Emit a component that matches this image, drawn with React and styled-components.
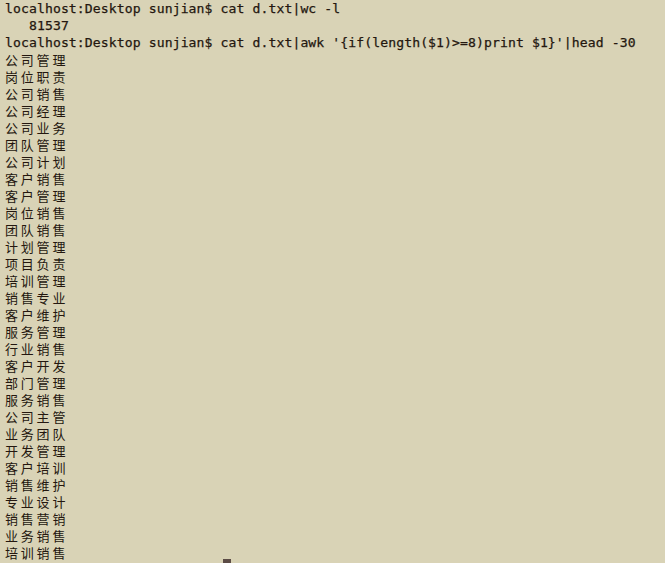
import React from "react";
import styled, { createGlobalStyle } from "styled-components";

const Global = createGlobalStyle`
  html, body {
    margin: 0;
    padding: 0;
    background: #d9d3b6;
    overflow: hidden;
  }
`;

const Terminal = styled.div`
  width: 665px;
  height: 563px;
  overflow: hidden;
  box-sizing: border-box;
  padding: 0 0 0 5px;
  background: #d9d3b6;
  color: #24170f;
  font-family: "DejaVu Sans Mono", "Liberation Mono", "Noto Sans CJK SC", monospace;
  font-size: 13.1px;
  line-height: 17px;
  -webkit-text-stroke: 0.25px #24170f;
`;

const Line = styled.div`
  height: 17px;
  white-space: pre;
  letter-spacing: 0.1px;
`;

const Wide = styled.span`
  font-family: "Noto Sans CJK SC", sans-serif;
  font-size: 13px;
  letter-spacing: 2.8px;
  -webkit-text-stroke: 0;
`;

const Cursor = styled.span`
  display: inline-block;
  width: 8px;
  height: 17px;
  vertical-align: top;
  margin: -2px 0 0 2px;
  background: #5b4b45;
`;

const prompt = "localhost:Desktop sunjian$ ";

const words = [
  "公司管理", "岗位职责", "公司销售", "公司经理", "公司业务", "团队管理",
  "公司计划", "客户销售", "客户管理", "岗位销售", "团队销售", "计划管理",
  "项目负责", "培训管理", "销售专业", "客户维护", "服务管理", "行业销售",
  "客户开发", "部门管理", "服务销售", "公司主管", "业务团队", "开发管理",
  "客户培训", "销售维护", "专业设计", "销售营销", "业务销售", "培训销售",
];

export default function App() {
  return (
    <>
      <Global />
      <Terminal>
        <Line>{prompt}cat d.txt|wc -l</Line>
        <Line>{"   81537"}</Line>
        <Line>{prompt}cat d.txt|awk '{"{"}if(length($1)&gt;=8)print $1{"}"}'|head -30</Line>
        {words.map((w, i) => (
          <Line key={i}>
            <Wide>{w}</Wide>
          </Line>
        ))}
        <Line>
          {prompt}
          <Cursor />
        </Line>
      </Terminal>
    </>
  );
}
